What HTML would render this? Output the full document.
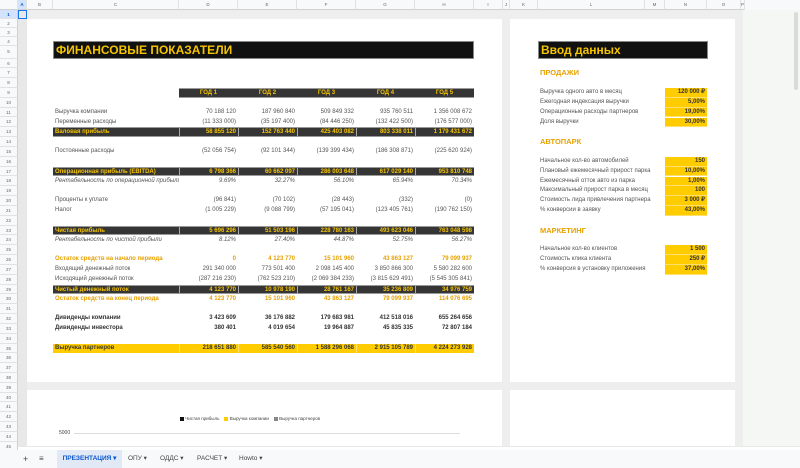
<!DOCTYPE html>
<html><head><meta charset="utf-8"><style>
*{margin:0;padding:0;box-sizing:border-box}
body{width:800px;height:468px;overflow:hidden;background:#fff;font-family:"Liberation Sans",sans-serif;position:relative}
.abs{position:absolute}
.colh{position:absolute;top:0;height:10px;background:#f8f9fa;border-right:1px solid #e2e2e2;border-bottom:1px solid #d0d0d0;font-size:4.5px;color:#666;text-align:center;line-height:10px}
.rowh{position:absolute;left:0;width:18px;background:#f8f9fa;border-bottom:1px solid #e2e2e2;border-right:1px solid #d0d0d0;font-size:4.5px;color:#666;text-align:center}
.r{position:absolute;left:53px;width:421px;height:9.8px;line-height:9.8px;font-size:6px;color:#555;display:flex}
.r .l{width:126px;padding-left:2px;white-space:nowrap;overflow:hidden}
.r .v{width:59px;text-align:right;padding-right:2px;white-space:nowrap}
.dk{background:#353535;color:#f5c400;font-weight:bold;border-top:1px solid #999;border-bottom:1px solid #999}
.dk .v{border-left:1px solid #aaa}
.it{font-style:italic}
.or{color:#e6a100;font-weight:bold}
.bd{color:#333;font-weight:bold}
.yl{background:#ffcc00;color:#333;font-weight:bold}
.yl .v{border-left:1px solid #ffe06a}
.q{position:absolute;left:538px;width:170px;height:9.8px;line-height:9.8px;font-size:6px;color:#555;display:flex}
.q .l{width:127px;padding-left:2px;white-space:nowrap}
.q .v{width:42px;background:#ffcc00;color:#333;font-weight:bold;text-align:right;padding-right:2px;border-bottom:1px solid #ffe06a}
.sec{position:absolute;left:540px;font-size:7.5px;font-weight:bold;color:#e6a100;height:9.8px;line-height:9.8px}
</style></head><body>
<!-- gray sheet bg -->
<div class="abs" style="left:18px;top:10px;width:725px;height:440px;background:#eeeeee"></div>
<div class="abs" style="left:743px;top:10px;width:57px;height:440px;background:#f5f7f5"></div>
<div class="abs" style="left:794px;top:12px;width:4px;height:78px;background:#dadada;border-radius:2px"></div>
<!-- cards -->
<div class="abs" style="left:27px;top:19px;width:475px;height:363px;background:#fff"></div>
<div class="abs" style="left:510px;top:19px;width:225px;height:363px;background:#fff"></div>
<div class="abs" style="left:27px;top:390px;width:475px;height:60px;background:#fff"></div>
<div class="abs" style="left:510px;top:390px;width:225px;height:60px;background:#fff"></div>
<div class="abs" style="left:18px;top:10px;width:9px;height:440px;background:#e8e8e8"></div>

<!-- column headers -->
<div class="colh" style="left:0;width:18px"></div>
<div class="colh" style="left:18px;width:9px;background:#d3e3fd;color:#0b57d0;font-weight:bold">A</div>
<div class="colh" style="left:27px;width:26px">B</div>
<div class="colh" style="left:53px;width:126px">C</div>
<div class="colh" style="left:179px;width:59px">D</div>
<div class="colh" style="left:238px;width:59px">E</div>
<div class="colh" style="left:297px;width:59px">F</div>
<div class="colh" style="left:356px;width:59px">G</div>
<div class="colh" style="left:415px;width:59px">H</div>
<div class="colh" style="left:474px;width:29px">I</div>
<div class="colh" style="left:503px;width:7px">J</div>
<div class="colh" style="left:510px;width:28px">K</div>
<div class="colh" style="left:538px;width:107px">L</div>
<div class="colh" style="left:645px;width:20px">M</div>
<div class="colh" style="left:665px;width:42px">N</div>
<div class="colh" style="left:707px;width:34px">O</div>
<div class="colh" style="left:741px;width:4px">P</div>
<div class="colh" style="left:745px;width:55px;border:none;background:#f8f9fa"></div>

<!-- row headers -->
<div class="rowh" style="top:10px;height:9px;line-height:9px;background:#d3e3fd;color:#0b57d0;font-weight:bold">1</div>
<div class="rowh" style="top:19px;height:9px;line-height:9px">2</div>
<div class="rowh" style="top:28px;height:9px;line-height:9px">3</div>
<div class="rowh" style="top:37px;height:9px;line-height:9px">4</div>
<div class="rowh" style="top:46px;height:12.5px;line-height:12.5px">5</div>
<div class="abs" style="left:0;top:58.5px;width:18px">
<div class="rowh" style="position:relative;height:9.83px;line-height:9.83px">6</div><div class="rowh" style="position:relative;height:9.83px;line-height:9.83px">7</div><div class="rowh" style="position:relative;height:9.83px;line-height:9.83px">8</div><div class="rowh" style="position:relative;height:9.83px;line-height:9.83px">9</div><div class="rowh" style="position:relative;height:9.83px;line-height:9.83px">10</div><div class="rowh" style="position:relative;height:9.83px;line-height:9.83px">11</div><div class="rowh" style="position:relative;height:9.83px;line-height:9.83px">12</div><div class="rowh" style="position:relative;height:9.83px;line-height:9.83px">13</div><div class="rowh" style="position:relative;height:9.83px;line-height:9.83px">14</div><div class="rowh" style="position:relative;height:9.83px;line-height:9.83px">15</div><div class="rowh" style="position:relative;height:9.83px;line-height:9.83px">16</div><div class="rowh" style="position:relative;height:9.83px;line-height:9.83px">17</div><div class="rowh" style="position:relative;height:9.83px;line-height:9.83px">18</div><div class="rowh" style="position:relative;height:9.83px;line-height:9.83px">19</div><div class="rowh" style="position:relative;height:9.83px;line-height:9.83px">20</div><div class="rowh" style="position:relative;height:9.83px;line-height:9.83px">21</div><div class="rowh" style="position:relative;height:9.83px;line-height:9.83px">22</div><div class="rowh" style="position:relative;height:9.83px;line-height:9.83px">23</div><div class="rowh" style="position:relative;height:9.83px;line-height:9.83px">24</div><div class="rowh" style="position:relative;height:9.83px;line-height:9.83px">25</div><div class="rowh" style="position:relative;height:9.83px;line-height:9.83px">26</div><div class="rowh" style="position:relative;height:9.83px;line-height:9.83px">27</div><div class="rowh" style="position:relative;height:9.83px;line-height:9.83px">28</div><div class="rowh" style="position:relative;height:9.83px;line-height:9.83px">29</div><div class="rowh" style="position:relative;height:9.83px;line-height:9.83px">30</div><div class="rowh" style="position:relative;height:9.83px;line-height:9.83px">31</div><div class="rowh" style="position:relative;height:9.83px;line-height:9.83px">32</div><div class="rowh" style="position:relative;height:9.83px;line-height:9.83px">33</div><div class="rowh" style="position:relative;height:9.83px;line-height:9.83px">34</div><div class="rowh" style="position:relative;height:9.83px;line-height:9.83px">35</div><div class="rowh" style="position:relative;height:9.83px;line-height:9.83px">36</div><div class="rowh" style="position:relative;height:9.83px;line-height:9.83px">37</div><div class="rowh" style="position:relative;height:9.83px;line-height:9.83px">38</div><div class="rowh" style="position:relative;height:9.83px;line-height:9.83px">39</div><div class="rowh" style="position:relative;height:9.83px;line-height:9.83px">40</div><div class="rowh" style="position:relative;height:9.83px;line-height:9.83px">41</div><div class="rowh" style="position:relative;height:9.83px;line-height:9.83px">42</div><div class="rowh" style="position:relative;height:9.83px;line-height:9.83px">43</div><div class="rowh" style="position:relative;height:9.83px;line-height:9.83px">44</div><div class="rowh" style="position:relative;height:9.83px;line-height:9.83px">45</div>
</div>
<div class="abs" style="left:18px;top:10px;width:9px;height:9px;border:1.5px solid #1a73e8"></div>

<!-- title -->
<div class="abs" style="left:53px;top:41px;width:421px;height:18px;background:#111;border:1px solid #888;color:#f5c400;font-weight:bold;font-size:12px;line-height:16px;padding-left:2px">ФИНАНСОВЫЕ ПОКАЗАТЕЛИ</div>

<!-- year header -->
<div class="r" style="top:88px"><div class="l"></div>
<div class="v dk" style="text-align:center;padding:0">ГОД 1</div><div class="v dk" style="text-align:center;padding:0">ГОД 2</div><div class="v dk" style="text-align:center;padding:0">ГОД 3</div><div class="v dk" style="text-align:center;padding:0">ГОД 4</div><div class="v dk" style="text-align:center;padding:0">ГОД 5</div></div>

<div class="r" style="top:107.7px"><div class="l">Выручка компании</div><div class="v">70 188 120</div><div class="v">187 960 840</div><div class="v">509 849 332</div><div class="v">935 760 511</div><div class="v">1 356 008 672</div></div>
<div class="r" style="top:117.5px"><div class="l">Переменные расходы</div><div class="v">(11 333 000)</div><div class="v">(35 197 400)</div><div class="v">(84 446 250)</div><div class="v">(132 422 500)</div><div class="v">(176 577 000)</div></div>
<div class="r dk" style="top:127.3px"><div class="l">Валовая прибыль</div><div class="v">58 855 120</div><div class="v">152 763 440</div><div class="v">425 403 082</div><div class="v">803 338 011</div><div class="v">1 179 431 672</div></div>
<div class="r" style="top:147px"><div class="l">Постоянные расходы</div><div class="v">(52 056 754)</div><div class="v">(92 101 344)</div><div class="v">(139 399 434)</div><div class="v">(186 308 871)</div><div class="v">(225 620 924)</div></div>
<div class="r dk" style="top:166.7px"><div class="l">Операционная прибыль (EBITDA)</div><div class="v">6 798 366</div><div class="v">60 662 097</div><div class="v">286 003 648</div><div class="v">617 029 140</div><div class="v">953 810 748</div></div>
<div class="r it" style="top:176.5px"><div class="l">Рентабельность по операционной прибыли</div><div class="v">9.69%</div><div class="v">32.27%</div><div class="v">56.10%</div><div class="v">65.94%</div><div class="v">70.34%</div></div>
<div class="r" style="top:196.2px"><div class="l">Проценты к уплате</div><div class="v">(96 841)</div><div class="v">(70 102)</div><div class="v">(28 443)</div><div class="v">(332)</div><div class="v">(0)</div></div>
<div class="r" style="top:206px"><div class="l">Налог</div><div class="v">(1 005 229)</div><div class="v">(9 088 799)</div><div class="v">(57 195 041)</div><div class="v">(123 405 761)</div><div class="v">(190 762 150)</div></div>
<div class="r dk" style="top:225.6px"><div class="l">Чистая прибыль</div><div class="v">5 696 296</div><div class="v">51 503 196</div><div class="v">228 780 163</div><div class="v">493 623 046</div><div class="v">763 048 598</div></div>
<div class="r it" style="top:235.5px"><div class="l">Рентабельность по чистой прибыли</div><div class="v">8.12%</div><div class="v">27.40%</div><div class="v">44.87%</div><div class="v">52.75%</div><div class="v">56.27%</div></div>
<div class="r or" style="top:255.2px"><div class="l">Остаток средств на начало периода</div><div class="v">0</div><div class="v">4 123 770</div><div class="v">15 101 960</div><div class="v">43 863 127</div><div class="v">79 099 937</div></div>
<div class="r" style="top:265px"><div class="l">Входящий денежный поток</div><div class="v">291 340 000</div><div class="v">773 501 400</div><div class="v">2 098 145 400</div><div class="v">3 850 866 300</div><div class="v">5 580 282 600</div></div>
<div class="r" style="top:274.8px"><div class="l">Исходящий денежный поток</div><div class="v">(287 216 230)</div><div class="v">(762 523 210)</div><div class="v">(2 069 384 233)</div><div class="v">(3 815 629 491)</div><div class="v">(5 545 305 841)</div></div>
<div class="r dk" style="top:284.7px"><div class="l">Чистый денежный поток</div><div class="v">4 123 770</div><div class="v">10 978 190</div><div class="v">28 761 167</div><div class="v">35 236 809</div><div class="v">34 976 759</div></div>
<div class="r or" style="top:294.5px"><div class="l">Остаток средств на конец периода</div><div class="v">4 123 770</div><div class="v">15 101 960</div><div class="v">43 863 127</div><div class="v">79 099 937</div><div class="v">114 076 695</div></div>
<div class="r bd" style="top:314.2px"><div class="l">Дивиденды компании</div><div class="v">3 423 609</div><div class="v">36 176 882</div><div class="v">179 683 981</div><div class="v">412 518 016</div><div class="v">655 264 656</div></div>
<div class="r bd" style="top:324px"><div class="l">Дивиденды инвестора</div><div class="v">380 401</div><div class="v">4 019 654</div><div class="v">19 964 887</div><div class="v">45 835 335</div><div class="v">72 807 184</div></div>
<div class="r yl" style="top:343.7px"><div class="l">Выручка партнеров</div><div class="v">218 651 880</div><div class="v">585 540 560</div><div class="v">1 588 296 068</div><div class="v">2 915 105 789</div><div class="v">4 224 273 928</div></div>

<!-- right card -->
<div class="abs" style="left:538px;top:41px;width:170px;height:18px;background:#111;border:1px solid #888;color:#f5c400;font-weight:bold;font-size:12px;line-height:16px;padding-left:2px">Ввод данных</div>
<div class="sec" style="top:68.4px">ПРОДАЖИ</div>
<div class="q" style="top:88px"><div class="l">Выручка одного авто в месяц</div><div class="v">120 000 ₽</div></div>
<div class="q" style="top:97.9px"><div class="l">Ежегодная индексация выручки</div><div class="v">5,00%</div></div>
<div class="q" style="top:107.7px"><div class="l">Операционные расходы партнеров</div><div class="v">19,00%</div></div>
<div class="q" style="top:117.5px"><div class="l">Доля выручки</div><div class="v">30,00%</div></div>
<div class="sec" style="top:137.2px">АВТОПАРК</div>
<div class="q" style="top:156.8px"><div class="l">Начальное кол-во автомобилей</div><div class="v">150</div></div>
<div class="q" style="top:166.7px"><div class="l">Плановый ежемесячный прирост парка</div><div class="v">10,00%</div></div>
<div class="q" style="top:176.5px"><div class="l">Ежемесячный отток авто из парка</div><div class="v">1,00%</div></div>
<div class="q" style="top:186.3px"><div class="l">Максимальный прирост парка в месяц</div><div class="v">100</div></div>
<div class="q" style="top:196.2px"><div class="l">Стоимость лида привлечения партнера</div><div class="v">3 000 ₽</div></div>
<div class="q" style="top:206px"><div class="l">% конверсии в заявку</div><div class="v">43,00%</div></div>
<div class="sec" style="top:225.6px">МАРКЕТИНГ</div>
<div class="q" style="top:245.3px"><div class="l">Начальное кол-во клиентов</div><div class="v">1 500</div></div>
<div class="q" style="top:255.2px"><div class="l">Стоимость клика клиента</div><div class="v">250 ₽</div></div>
<div class="q" style="top:265px"><div class="l">% конверсия в установку приложения</div><div class="v">37,00%</div></div>

<!-- chart -->
<div class="abs" style="left:180px;top:416px;font-size:4.5px;color:#444;line-height:6px;white-space:nowrap">
<span style="display:inline-block;width:4px;height:4px;background:#111;vertical-align:middle"></span> Чистая прибыль &nbsp;&nbsp;
<span style="display:inline-block;width:4px;height:4px;background:#ffcc00;vertical-align:middle"></span> Выручка компании &nbsp;&nbsp;
<span style="display:inline-block;width:4px;height:4px;background:#888;vertical-align:middle"></span> Выручка партнеров</div>
<div class="abs" style="left:59px;top:430px;font-size:5px;color:#444">5000</div>
<div class="abs" style="left:74px;top:433px;width:386px;height:1px;background:#ddd"></div>

<!-- bottom scroll and tabs -->
<div class="abs" style="left:18px;top:446px;width:782px;height:4px;background:#fff;border-top:1px solid #e8e8e8"></div>
<div class="abs" style="left:0;top:450px;width:800px;height:18px;background:#f8f9fa;font-size:6.5px;color:#444;line-height:18px">
<span class="abs" style="left:23px;font-size:9px">+</span>
<span class="abs" style="left:39px;font-size:8px">≡</span>
<span class="abs" style="left:57px;width:65px;height:18px;background:#e1e9f7;color:#0b57d0;font-weight:bold;text-align:center">ПРЕЗЕНТАЦИЯ ▾</span>
<span class="abs" style="left:128px">ОПУ ▾</span>
<span class="abs" style="left:160px">ОДДС ▾</span>
<span class="abs" style="left:197px">РАСЧЕТ ▾</span>
<span class="abs" style="left:239px">Howto ▾</span>
</div>
</body></html>
